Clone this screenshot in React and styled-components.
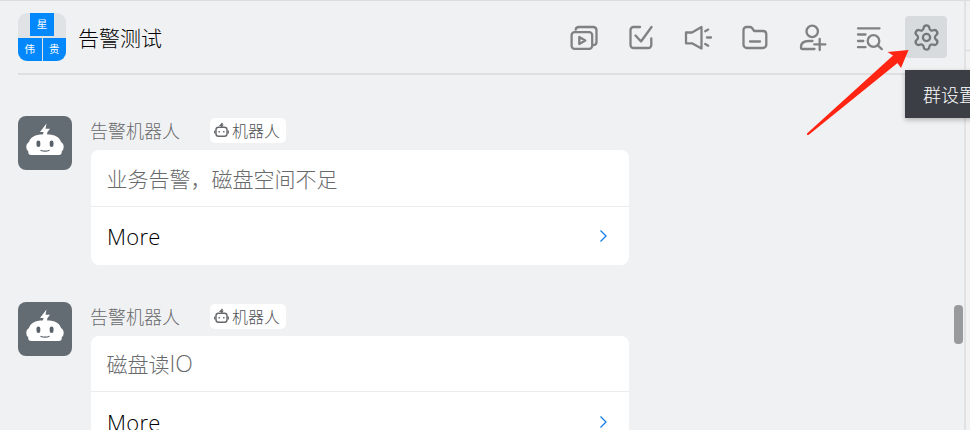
import React from "react";
import styled, { createGlobalStyle } from "styled-components";
import { Settings } from "lucide-react";

const Global = createGlobalStyle`
  * { box-sizing: border-box; }
  body {
    margin: 0;
    overflow: hidden;
    background: #f0f1f3;
    font-family: "Noto Sans CJK SC", "Noto Sans", sans-serif;
    font-weight: 300;
  }
`;

const Window = styled.div`
  position: relative;
  display: flex;
  width: 970px;
  height: 430px;
  overflow: hidden;
  background: #f0f1f3;
  border-top: 1px solid #dcddde;
`;

const ChatPanel = styled.main`
  width: 964px;
  flex: none;
  display: flex;
  flex-direction: column;
`;

const SidePanel = styled.aside`
  flex: 1;
  border-left: 2px solid #e2e2e3;
  background: #f2f2f2;
`;

const SideHeader = styled.div`
  height: 50px;
  border-bottom: 1px solid #d6d7d9;
  background: #f0f1f3;
`;

const Header = styled.header`
  display: flex;
  align-items: flex-start;
  flex: none;
  height: 74px;
  margin-left: 18px;
  padding: 12px 17px 0 0;
  border-bottom: 2px solid #dfe0e2;
`;

const GroupAvatar = styled.div`
  display: grid;
  grid-template-columns: repeat(4, 1fr);
  grid-template-rows: 23px 23px;
  gap: 2px 1px;
  width: 48px;
  height: 48px;
  border-radius: 9px;
  overflow: hidden;
  background: #dfe3e6;
`;

const AvatarTile = styled.span`
  grid-column: ${(p) => p.$column} / span 2;
  display: flex;
  align-items: center;
  justify-content: center;
  padding-bottom: 1px;
  background: #0288fb;
  color: #fff;
  font-size: 10.5px;
  font-weight: 400;
  line-height: 1;
`;

const Title = styled.h1`
  flex: 1;
  margin: 8px 0 0 12px;
  font-size: 21px;
  line-height: 32px;
  font-weight: 300;
  color: #000;
`;

const Toolbar = styled.nav`
  display: flex;
  gap: 15px;
  margin-top: 3px;
`;

const ToolButton = styled.button`
  display: flex;
  align-items: center;
  justify-content: center;
  width: 42px;
  height: 42px;
  padding: 0;
  border: 0;
  border-radius: 4px;
  background: ${(p) => (p.$active ? "#d7dbde" : "transparent")};
  color: ${(p) => (p.$active ? "#74777b" : "#808183")};
`;

const LineIcon = styled.svg.attrs({ viewBox: "0 0 42 42", width: 42, height: 42 })`
  fill: none;
  stroke: currentColor;
  stroke-width: 2.3;
  stroke-linecap: round;
  stroke-linejoin: round;
`;

const Messages = styled.section`
  display: flex;
  flex-direction: column;
  gap: 37px;
  padding: 41px 0 0 18px;
`;

const Message = styled.article`
  display: flex;
  gap: 19px;
`;

const BotAvatar = styled.div`
  width: 54px;
  height: 54px;
  border-radius: 8px;
  background: #646c73;
`;

const Body = styled.div`
  display: flex;
  flex-direction: column;
  width: 538px;
`;

const Sender = styled.div`
  display: flex;
  align-items: center;
  height: 28px;
  margin-bottom: 6px;
`;

const SenderName = styled.span`
  width: 119px;
  margin-left: -1px;
  font-size: 18px;
  line-height: 28px;
  color: #68696b;
`;

const BotTag = styled.span`
  display: flex;
  align-items: center;
  gap: 3px;
  width: 76px;
  height: 25px;
  margin-left: 1px;
  padding-left: 4px;
  border-radius: 5px;
  background: #fff;
  color: #505255;
  font-size: 16px;
  line-height: 24px;
  white-space: nowrap;
`;

const Card = styled.div`
  height: 115px;
  border-radius: 8px;
  overflow: hidden;
  background: #fff;
`;

const CardText = styled.p`
  height: ${(p) => (p.$compact ? 56 : 57)}px;
  margin: 0;
  padding-left: 15.5px;
  border-bottom: 1px solid #ececee;
  font-size: 21px;
  line-height: ${(p) => (p.$compact ? 54 : 56)}px;
  color: #68696b;
`;

const Latin = styled.span`
  font-family: "Open Sans", sans-serif;
  font-size: 23px;
`;

const MoreRow = styled.a`
  display: flex;
  align-items: center;
  justify-content: space-between;
  height: ${(p) => (p.$compact ? 59 : 57)}px;
  padding: 0 20px 0 16px;
  font-family: "Open Sans", sans-serif;
  font-weight: 300;
  font-size: 22px;
  letter-spacing: 0.3px;
  color: #000;
`;

const Chevron = styled.svg`
  width: 12px;
  height: 14px;
  fill: none;
  stroke: #1280e8;
  stroke-width: 1.3;
`;

const ScrollThumb = styled.div`
  position: absolute;
  top: 304px;
  left: 954px;
  width: 9px;
  height: 39px;
  border-radius: 4px;
  background: #999a9c;
`;

const Tooltip = styled.div`
  position: absolute;
  top: 69px;
  left: 905px;
  width: 90px;
  height: 48px;
  padding-left: 18px;
  background: #3c3e46;
  box-shadow: 0 2px 5px rgba(0, 0, 0, 0.25);
  color: #fff;
  font-size: 18px;
  line-height: 48px;
  white-space: nowrap;
`;

const Pointer = styled.svg`
  position: absolute;
  top: 44px;
  left: 800px;
  width: 115px;
  height: 100px;
  fill: #ff2512;
`;

const tools = [
  <>
    <rect x="8.6" y="16.2" width="20.6" height="16.6" rx="3" />
    <path d="M12.7 13.6Q13 11 16 11H30q3.5 0 3.5 3.5V26q0 2.7-3 3.2M16.3 21v7l6-3.5z" />
  </>,
  <path d="M20 11h-6.5a3 3 0 0 0-3 3v15a3 3 0 0 0 3 3h14.8a3 3 0 0 0 3-3v-6.5M15.5 19.5l5.5 6L31.5 11" />,
  <path d="M9 16.5h6L24.5 11v21.5L15 27.3H9zM28.2 15.3l3-1.7M30 21.5h4M28.2 28l3 1.7" />,
  <path d="M9.5 14a3 3 0 0 1 3-3H16q1.2 0 2 1l2.2 3H29a3.3 3.3 0 0 1 3.3 3v10.7a3.3 3.3 0 0 1-3.3 3.3H12.8a3.3 3.3 0 0 1-3.3-3.3zM16 25.5h10" />,
  <>
    <circle cx="21.2" cy="15.4" r="5.7" />
    <path d="M21.5 25H18q-8 0-8 6v.5q0 1.5 1.5 1.5h12M28.7 23v11M23.3 28.4h11" />
  </>,
  <>
    <path d="M10 12.3h21.5M10 18.5h7.5M10 25h5.3M10 31.2h7.5M29.8 29.3l4 3.8" />
    <circle cx="25.5" cy="25" r="5.8" />
  </>,
];

const BotFace = () => (
  <svg width="54" height="54" viewBox="0 0 54 54">
    <path fill="#fff" d="M28.500 7.500l-6.500 8.500h3.600l-.8 2.500C17 18.500 12.500 21 11 26C9 27 8.200 29 8.300 31.200Q8.400 34 10.200 35V36q0 3 3 3h27.600q3 0 3-3v-1q1.800-1 1.900-3.800c.1-2.200-.7-4.200-2.700-5.200C41.500 21 37 18.500 29.200 18.500v-2L32 12.800H27.500z" />
    <rect x="18.500" y="24.500" width="3.800" height="6.500" rx="1.900" fill="#59626a" />
    <rect x="31.700" y="24.500" width="3.800" height="6.500" rx="1.900" fill="#59626a" />
    <path d="M22.500 34.300q4.500 1.800 9 0" fill="none" stroke="#59626a" strokeWidth="1.200" />
  </svg>
);

const TagFace = () => (
  <svg width="15" height="16" viewBox="0 0 15 16" fill="none" stroke="#66686b" strokeWidth="1.400">
    <rect x="2" y="5.200" width="11" height="9" rx="2.500" />
    <path d="M.8 8.500v3M14.200 8.500v3M8.500 1L6.500 3.200h2L7.500 5" />
    <path d="M5.200 9v1.600M9.800 9v1.600" />
  </svg>
);

const messages = [
  { id: 1, text: "业务告警，磁盘空间不足" },
  { id: 2, text: "磁盘读", latin: "IO", compact: true },
];

export default function App() {
  return (
    <>
      <Global />
      <Window>
        <ChatPanel>
          <Header>
            <GroupAvatar>
              <AvatarTile $column={2}>星</AvatarTile>
              <AvatarTile $column={1}>伟</AvatarTile>
              <AvatarTile $column={3}>贵</AvatarTile>
            </GroupAvatar>
            <Title>告警测试</Title>
            <Toolbar>
              {tools.map((icon, i) => (
                <ToolButton key={i}>
                  <LineIcon>{icon}</LineIcon>
                </ToolButton>
              ))}
              <ToolButton $active>
                <Settings size={29} strokeWidth={1.9} />
              </ToolButton>
            </Toolbar>
          </Header>
          <Messages>
            {messages.map((m) => (
              <Message key={m.id}>
                <BotAvatar>
                  <BotFace />
                </BotAvatar>
                <Body>
                  <Sender>
                    <SenderName>告警机器人</SenderName>
                    <BotTag>
                      <TagFace />
                      机器人
                    </BotTag>
                  </Sender>
                  <Card>
                    <CardText $compact={m.compact}>
                      {m.text}
                      {m.latin && <Latin>{m.latin}</Latin>}
                    </CardText>
                    <MoreRow $compact={m.compact}>
                      More
                      <Chevron viewBox="0 0 12 14">
                        <path d="M3.500 1.500L9 7L3.500 12.500" />
                      </Chevron>
                    </MoreRow>
                  </Card>
                </Body>
              </Message>
            ))}
          </Messages>
        </ChatPanel>
        <SidePanel>
          <SideHeader />
        </SidePanel>
        <ScrollThumb />
        <Tooltip>群设置</Tooltip>
        <Pointer viewBox="0 0 115 100">
          <path d="M108.500 5L87.500 7L93 10.500L7 88.500Q6.500 90.500 8.500 90L97.500 18L101 23z" />
        </Pointer>
      </Window>
    </>
  );
}
